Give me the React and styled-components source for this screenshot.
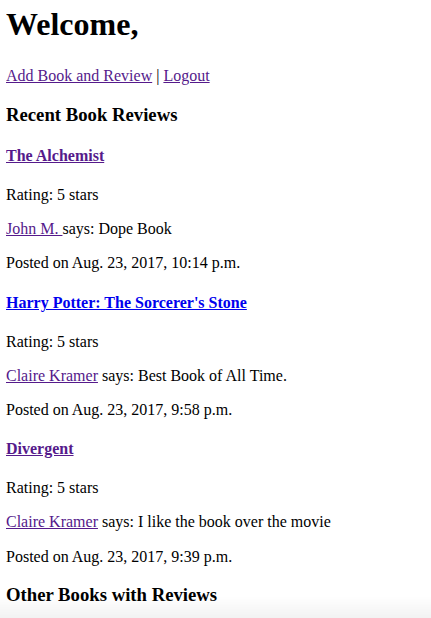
import React from "react"
import styled, { createGlobalStyle } from "styled-components"

const GlobalStyle = createGlobalStyle`
  html, body {
    background: #ffffff;
  }
  body {
    margin: 0 6px;
    font-family: "Liberation Serif", "Times New Roman", serif;
    font-size: 16px;
    color: #000000;
  }
`

const Page = styled.div`
  display: block;
  padding-top: 1px;
`

const Title = styled.h1`
  font-size: 32px;
  font-weight: bold;
  margin: 5px 0 24px 0;
`

const Line = styled.p`
  margin: 16px 0;
  line-height: 18.2px;
`

const Link = styled.a`
  color: ${props => (props.$visited ? "#551a8b" : "#0000ee")};
  text-decoration: underline;
  cursor: pointer;
`

const SectionTitle = styled.h3`
  font-size: 18.72px;
  font-weight: bold;
  margin: 18.72px 0;
`

const BookTitle = styled.h4`
  font-size: 16px;
  font-weight: bold;
  margin: 21px 0;
`

const BottomFade = styled.div`
  position: fixed;
  left: 0;
  right: 0;
  bottom: 0;
  height: 22px;
  pointer-events: none;
  background: linear-gradient(
    to bottom,
    rgba(0, 0, 0, 0) 0%,
    rgba(0, 0, 0, 0.05) 100%
  );
`

const reviews = [
  {
    book: "The Alchemist",
    visited: true,
    rating: 5,
    user: "John M. ",
    text: "Dope Book",
    posted: "Aug. 23, 2017, 10:14 p.m.",
  },
  {
    book: "Harry Potter: The Sorcerer's Stone",
    visited: false,
    rating: 5,
    user: "Claire Kramer",
    text: "Best Book of All Time.",
    posted: "Aug. 23, 2017, 9:58 p.m.",
  },
  {
    book: "Divergent",
    visited: true,
    rating: 5,
    user: "Claire Kramer",
    text: "I like the book over the movie",
    posted: "Aug. 23, 2017, 9:39 p.m.",
  },
]

const Review = ({ review }) => (
  <>
    <BookTitle>
      <Link $visited={review.visited}>{review.book}</Link>
    </BookTitle>
    <Line>Rating: {review.rating} stars</Line>
    <Line>
      <Link $visited>{review.user}</Link> says: {review.text}
    </Line>
    <Line>Posted on {review.posted}</Line>
  </>
)

export default function App() {
  return (
    <Page>
      <GlobalStyle />
      <Title>Welcome,</Title>
      <Line>
        <Link $visited>Add Book and Review</Link> | <Link $visited>Logout</Link>
      </Line>
      <SectionTitle>Recent Book Reviews</SectionTitle>
      {reviews.map((review, index) => (
        <Review key={index} review={review} />
      ))}
      <SectionTitle>Other Books with Reviews</SectionTitle>
      <BottomFade />
    </Page>
  )
}
